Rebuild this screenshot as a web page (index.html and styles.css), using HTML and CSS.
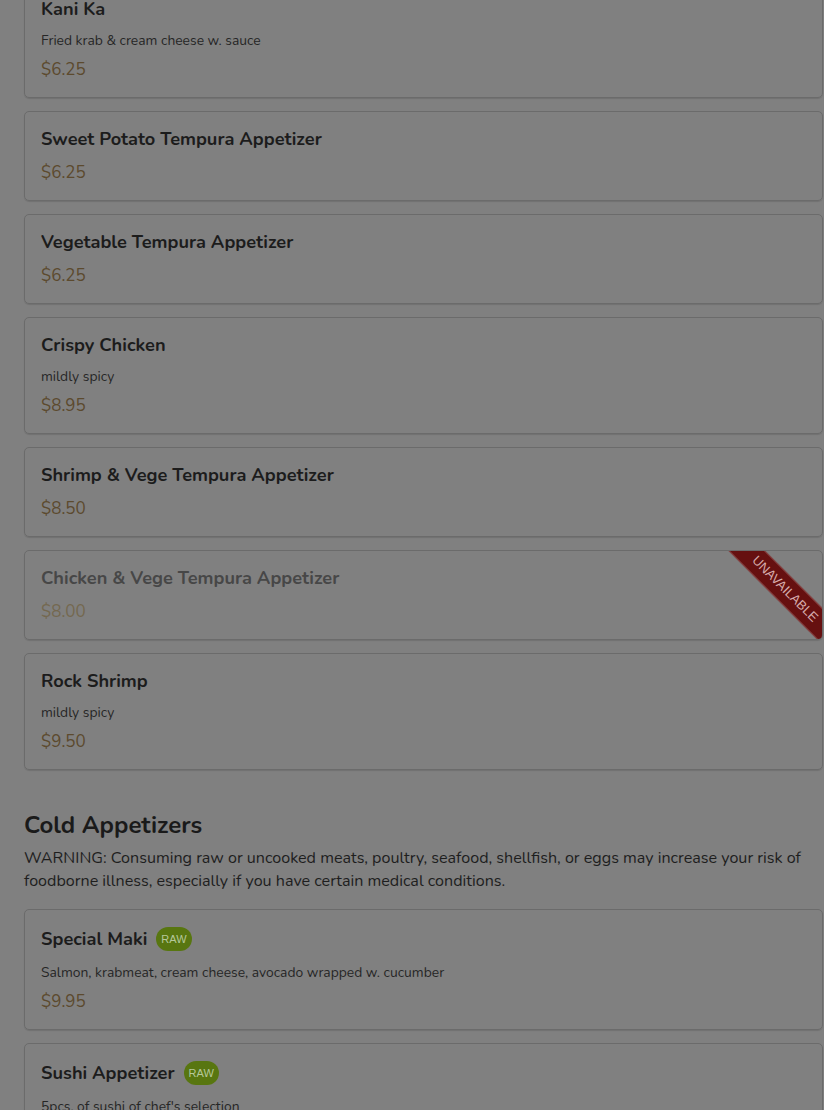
FILE: index.html
```html
<!DOCTYPE html>
<html lang="en">
<head>
<meta charset="utf-8">
<title>Menu</title>
<link rel="stylesheet" href="styles.css">
</head>
<body>
<div class="page">
  <div class="list">
    <div class="card">
      <div class="title-row"><h3 class="name">Kani Ka</h3></div>
      <p class="desc">Fried krab &amp; cream cheese w. sauce</p>
      <p class="price">$6.25</p>
    </div>
    <div class="card">
      <div class="title-row"><h3 class="name">Sweet Potato Tempura Appetizer</h3></div>
      <p class="price">$6.25</p>
    </div>
    <div class="card">
      <div class="title-row"><h3 class="name">Vegetable Tempura Appetizer</h3></div>
      <p class="price">$6.25</p>
    </div>
    <div class="card">
      <div class="title-row"><h3 class="name">Crispy Chicken</h3></div>
      <p class="desc">mildly spicy</p>
      <p class="price">$8.95</p>
    </div>
    <div class="card">
      <div class="title-row"><h3 class="name">Shrimp &amp; Vege Tempura Appetizer</h3></div>
      <p class="price">$8.50</p>
    </div>
    <div class="card card-unavailable">
      <div class="title-row"><h3 class="name">Chicken &amp; Vege Tempura Appetizer</h3></div>
      <p class="price">$8.00</p>
      <div class="ribbon">Unavailable</div>
    </div>
    <div class="card">
      <div class="title-row"><h3 class="name">Rock Shrimp</h3></div>
      <p class="desc">mildly spicy</p>
      <p class="price">$9.50</p>
    </div>
  </div>

  <section class="section">
    <h2 class="section-title">Cold Appetizers</h2>
    <p class="section-note">WARNING: Consuming raw or uncooked meats, poultry, seafood, shellfish, or eggs may increase your risk of foodborne illness, especially if you have certain medical conditions.</p>
    <div class="list">
      <div class="card">
        <div class="title-row"><h3 class="name">Special Maki</h3><span class="badge">RAW</span></div>
        <p class="desc">Salmon, krabmeat, cream cheese, avocado wrapped w. cucumber</p>
        <p class="price">$9.95</p>
      </div>
      <div class="card">
        <div class="title-row"><h3 class="name">Sushi Appetizer</h3><span class="badge">RAW</span></div>
        <p class="desc">5pcs. of sushi of chef's selection</p>
        <p class="price">$9.95</p>
      </div>
    </div>
  </section>
</div>
</body>
</html>
```

FILE: styles.css
```css
html, body {
  margin: 0;
  padding: 0;
  background: #808080;
}
body {
  font-family: "Nunito", "Open Sans", "Liberation Sans", sans-serif;
  color: #1c1c1c;
  overflow: hidden;
}
.page {
  margin-top: -19px;
  padding: 0 1px 0 24px;
}
.list {
  display: flex;
  flex-direction: column;
  gap: 13px;
}
.card {
  position: relative;
  overflow: hidden;
  border: 1px solid #6b6b6b;
  border-radius: 5px;
  padding: 17px 16px 15px 16px;
  box-shadow: 0 1px 1px rgba(0,0,0,0.12);
}
.title-row {
  display: flex;
  align-items: center;
  gap: 9px;
  min-height: 20px;
  margin-bottom: 12px;
}
.title-row + .price {
  margin-top: 2px;
}
.name {
  margin: 0;
  font-size: 18.2px;
  line-height: 20px;
  font-weight: 700;
  color: #1c1c1c;
}
.badge {
  display: inline-block;
  height: 24px;
  line-height: 24px;
  padding: 0 5px;
  border-radius: 12px;
  background: #587610;
  color: #b6c89a;
  font-family: "Liberation Sans", sans-serif;
  font-size: 11px;
}
.desc {
  margin: 0 0 7px 0;
  font-size: 13.85px;
  line-height: 20px;
  color: #262626;
}
.price {
  margin: 0;
  font-size: 17px;
  line-height: 24px;
  color: #5c4a2e;
}
.card-unavailable .name {
  color: #474747;
}
.card-unavailable .price {
  color: #74684f;
}
.ribbon {
  position: absolute;
  top: 25px;
  right: -43px;
  width: 160px;
  height: 24px;
  line-height: 24px;
  background: #661010;
  border-top: 1px solid #8a4a4a;
  border-bottom: 1px solid #8a4a4a;
  color: #d6acac;
  text-align: center;
  text-transform: uppercase;
  font-family: "Liberation Sans", sans-serif;
  font-size: 13px;
  transform: rotate(45deg);
}
.section {
  margin-top: 39px;
}
.section-title {
  margin: 0 0 6px 0;
  font-size: 24px;
  line-height: 32px;
  font-weight: 700;
  color: #1a1a1a;
}
.section-note {
  margin: 0 0 16px 0;
  font-size: 16.1px;
  line-height: 23px;
  color: #1e1e1e;
}
```
